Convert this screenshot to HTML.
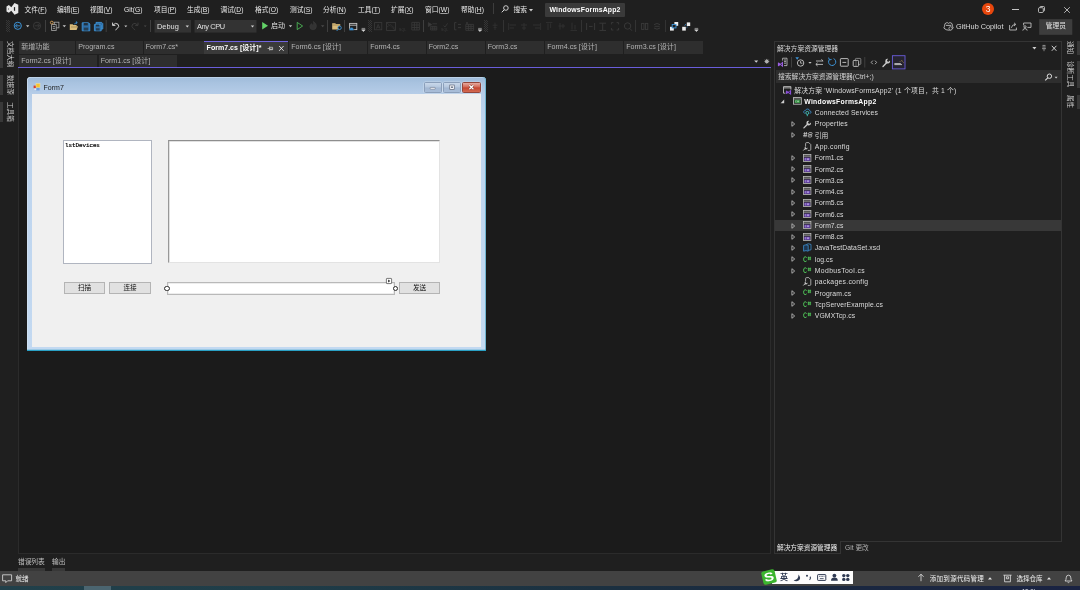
<!DOCTYPE html>
<html lang="zh-CN">
<head>
<meta charset="utf-8">
<title>WindowsFormsApp2 - Microsoft Visual Studio</title>
<style>
*{box-sizing:border-box;margin:0;padding:0}
html,body{width:1080px;height:590px;overflow:hidden;background:#1f1f1f}
body{position:relative;font-family:"Liberation Sans","Noto Sans CJK SC",sans-serif;font-size:6.8px;color:#d6d6d6;line-height:1}
.a{position:absolute;white-space:nowrap}
.t{position:absolute;white-space:nowrap;line-height:10px;height:10px}
.menu .t{top:5px;color:#e8e8e8;font-size:6.75px}
.menu u{text-decoration-thickness:0.5px;text-underline-offset:0.6px;text-decoration-color:#a0a0a0}
.tab{position:absolute;height:12.8px;background:#2e2e2e;color:#b4b4b4;font-size:7.1px;line-height:13.6px;padding-left:2.2px;white-space:nowrap;overflow:hidden}
.row{position:absolute;left:775px;width:286px;height:11.25px}
.row .t{top:1.2px;color:#dcdcdc;font-size:6.8px}
.vt{position:absolute;white-space:nowrap;transform-origin:0 0;transform:rotate(90deg);font-size:6.6px;line-height:10px;color:#c8c8c8}
svg{position:absolute;overflow:visible}
.btn{background:#e1e1e1;border:0.8px solid #b4b4b4;color:#111;font-size:6.6px;line-height:10.2px;text-align:center}
</style>
</head>
<body>
<div id="app" style="position:absolute;left:0;top:0;width:1080px;height:590px;will-change:transform">

<!-- ===== menu bar ===== -->
<div class="menu" id="menubar">
  <svg style="left:0;top:0" width="20" height="18" viewBox="0 0 20 18"><path d="M6.5 6.6L8.9 5.1L11.3 7.2L14.5 3.1L18.3 4.8V13L14.5 14.7L11.3 10.7L8.9 12.7L6.5 11.4Z M8.1 8.3V9.7L9.1 9Z M13.9 7.3L15.1 6.9V11L13.9 10.6Z" fill="#e6e6e6" fill-rule="evenodd"/></svg>
  <span class="t" style="left:24.5px">文件(<u>F</u>)</span>
  <span class="t" style="left:57px">编辑(<u>E</u>)</span>
  <span class="t" style="left:90px">视图(<u>V</u>)</span>
  <span class="t" style="left:124px">Git(<u>G</u>)</span>
  <span class="t" style="left:154px">项目(<u>P</u>)</span>
  <span class="t" style="left:187px">生成(<u>B</u>)</span>
  <span class="t" style="left:220.5px">调试(<u>D</u>)</span>
  <span class="t" style="left:255px">格式(<u>O</u>)</span>
  <span class="t" style="left:290px">测试(<u>S</u>)</span>
  <span class="t" style="left:323px">分析(<u>N</u>)</span>
  <span class="t" style="left:358px">工具(<u>T</u>)</span>
  <span class="t" style="left:391px">扩展(<u>X</u>)</span>
  <span class="t" style="left:425px">窗口(<u>W</u>)</span>
  <span class="t" style="left:461px">帮助(<u>H</u>)</span>
  <div class="a" style="left:493px;top:3px;width:1px;height:11px;background:#3d3d3d"></div>
  <svg style="left:501px;top:5px" width="8" height="8" viewBox="0 0 8 8"><circle cx="4.9" cy="3" r="2.3" fill="none" stroke="#dcdcdc" stroke-width="0.9"/><path d="M3.3 4.7 L0.8 7.3" stroke="#dcdcdc" stroke-width="1"/></svg>
  <span class="t" style="left:513.5px">搜索</span>
  <svg style="left:529px;top:8.5px" width="4" height="3" viewBox="0 0 4 3"><path d="M0 0H4L2 2.4Z" fill="#d0d0d0"/></svg>
  <div class="a" style="left:544.5px;top:2.5px;width:80.5px;height:14px;background:#3a3a3a;border-radius:1px"></div>
  <span class="t" style="left:549.5px;color:#fff;font-weight:bold;font-size:6.9px;letter-spacing:0.16px">WindowsFormsApp2</span>
  <div class="a" style="left:982px;top:3px;width:12px;height:12px;border-radius:6px;background:#e8470d;color:#fff;font-size:8.5px;line-height:12px;text-align:center">3</div>
  <div class="a" style="left:1012px;top:9px;width:6.6px;height:0.8px;background:#c4c4c4"></div>
  <svg style="left:1038px;top:6px" width="7" height="7" viewBox="0 0 7 7"><rect x="0.5" y="1.7" width="4.8" height="4.8" rx="1" fill="none" stroke="#d8d8d8" stroke-width="0.8"/><path d="M1.9 1.7 V1.3 Q1.9 0.5 2.7 0.5 H5.5 Q6.5 0.5 6.5 1.5 V4.3 Q6.5 5.1 5.7 5.1 H5.3" fill="none" stroke="#d8d8d8" stroke-width="0.8"/></svg>
  <svg style="left:1064px;top:6.5px" width="6" height="6" viewBox="0 0 6 6"><path d="M0.2 0.2L5.8 5.8M5.8 0.2L0.2 5.8" stroke="#d8d8d8" stroke-width="0.8"/></svg>
</div>

<!-- ===== toolbar ===== -->
<div id="toolbar">
<svg style="left:0;top:0" width="1080" height="40" viewBox="0 0 1080 40">
  <defs>
    <pattern id="grip" x="0" y="0" width="2" height="2" patternUnits="userSpaceOnUse"><rect x="0" y="0" width="1" height="1" fill="#363636"/><rect x="1" y="1" width="1" height="1" fill="#363636"/></pattern>
  </defs>
  <g fill="url(#grip)"><rect x="6" y="20" width="4" height="12"/><rect x="368" y="20" width="4" height="12"/><rect x="484" y="20" width="4" height="12"/></g>
  <!-- back / forward -->
  <circle cx="17.8" cy="25.8" r="3.6" fill="none" stroke="#3d93d6" stroke-width="1"/>
  <path d="M20.4 25.8H15.6M17.4 23.9L15.5 25.8L17.4 27.7" fill="none" stroke="#3d93d6" stroke-width="0.9"/>
  <path d="M26 25.3H29.4L27.7 27.2Z" fill="#c8c8c8"/>
  <circle cx="37" cy="25.8" r="3.6" fill="none" stroke="#3c3c3c" stroke-width="0.9"/>
  <path d="M34.6 25.8H39.4M37.6 23.9L39.5 25.8L37.6 27.7" fill="none" stroke="#3c3c3c" stroke-width="0.9"/>
  <g stroke="#3f3f3f" stroke-width="1"><path d="M45.5 20V32M106.2 20V32M150.5 20V32M327.5 20V32M344.5 20V32M423.5 20V32"/></g>
  <g stroke="#333" stroke-width="1"><path d="M503.5 20V32M581.5 20V32M635.5 20V32M665.5 20V32"/></g>
  <!-- new item -->
  <g fill="none" stroke="#a4a4a4" stroke-width="0.85"><rect x="54.3" y="22.2" width="4.6" height="5.6"/><rect x="51.6" y="24.6" width="4.6" height="5.8" fill="#1f1f1f"/><path d="M52.8 26.6H55M52.8 28.4H55"/></g>
  <circle cx="51.8" cy="22.6" r="1.4" fill="none" stroke="#d9a35a" stroke-width="0.9"/>
  <path d="M62.6 25.3H66L64.3 27.2Z" fill="#c8c8c8"/>
  <!-- open -->
  <path d="M69.8 24.2H72.6L73.4 25H76.6V26.2H78L76.6 30H69.8Z" fill="#d9bb7a"/>
  <path d="M71 27H77.2" stroke="#8a7444" stroke-width="0.6"/>
  <path d="M74.4 24.4Q75 22.6 77 22.6M75.9 21.4L77.3 22.6L75.9 23.8" fill="none" stroke="#3d93d6" stroke-width="0.9"/>
  <!-- save -->
  <path d="M82.2 22.8H88.6L89.8 24V30.8H82.2Z" fill="#2f6ea6" stroke="#3d93d6" stroke-width="0.9"/>
  <rect x="83.8" y="23" width="4" height="2.4" fill="#1f1f1f" opacity="0.75"/><rect x="83.8" y="27.6" width="4.4" height="3" fill="#1f1f1f" opacity="0.6"/>
  <!-- save all -->
  <path d="M96 22.4H101.6L102.8 23.6V29H96Z" fill="#2f6ea6" stroke="#3d93d6" stroke-width="0.9"/>
  <path d="M94.4 24.4H100.2L101.2 25.4V30.8H94.4Z" fill="#2f6ea6" stroke="#3d93d6" stroke-width="0.9"/>
  <rect x="96" y="24.6" width="3.2" height="1.8" fill="#1f1f1f" opacity="0.7"/><rect x="96" y="28.2" width="3.6" height="2.4" fill="#1f1f1f" opacity="0.6"/>
  <!-- undo / redo -->
  <path d="M112.6 22.6V25.4H115.4M112.8 25.2Q115.6 22 118 24.2Q119.8 26.4 117.4 28.4L115.4 30" fill="none" stroke="#d4d4d4" stroke-width="1"/>
  <path d="M124.3 25.6H127.3L125.8 27.3Z" fill="#c8c8c8"/>
  <path d="M138 22.6V25.4H135.2M137.8 25.2Q135 22 132.6 24.2Q130.8 26.4 133.2 28.4L135.2 30" fill="none" stroke="#3c3c3c" stroke-width="1"/>
  <path d="M143.8 25.6H146.6L145.2 27.1Z" fill="#4a4a4a"/>
  <!-- combos -->
  <rect x="154.5" y="20" width="36.5" height="12.6" fill="#333333"/>
  <rect x="194.5" y="20" width="62" height="12.6" fill="#333333"/>
  <path d="M185.6 25.6H189L187.3 27.4Z" fill="#d0d0d0"/>
  <path d="M250.8 25.6H254.2L252.5 27.4Z" fill="#d0d0d0"/>
  <!-- start -->
  <path d="M262.2 22V29.6L268 25.8Z" fill="#63d268"/>
  <path d="M288.8 25.3H292.2L290.5 27.2Z" fill="#c8c8c8"/>
  <path d="M297.2 22.4V29.6L302.6 26Z" fill="none" stroke="#4fbf5a" stroke-width="0.85"/>
  <path d="M313.4 21.4Q316.8 23.4 316.4 26.6Q316 29.8 313 29.8Q309.8 29.6 309.8 26.6Q309.8 24.4 312 23.6Q311.8 25.2 313 25.6Q314.2 23.6 313.4 21.4Z" fill="#333" stroke="#3a3a3a" stroke-width="0.6"/>
  <path d="M321 25.3H324.4L322.7 27.2Z" fill="#4a4a4a"/>
  <!-- folder search -->
  <path d="M332.2 23.2H335.2L336 24H340.2V29.4H332.2Z" fill="#d9bb7a"/>
  <path d="M332.2 25H340.2" stroke="#8a7444" stroke-width="0.6"/>
  <circle cx="339.6" cy="27.8" r="1.7" fill="#1f1f1f" stroke="#3d93d6" stroke-width="0.9"/><path d="M338.4 29.2L336.6 31" stroke="#3d93d6" stroke-width="0.9"/>
  <!-- window cloud -->
  <rect x="349.6" y="23.4" width="7.2" height="6.2" fill="none" stroke="#c4c4c4" stroke-width="0.9"/><path d="M349.6 25.2H356.8" stroke="#c4c4c4" stroke-width="0.9"/>
  <path d="M349.4 30.6Q348.6 29.2 350 28.6Q350.6 27 352 27.4Q353.4 27.4 353.4 28.8Q354.4 29.4 353.6 30.6Z" fill="#3d93d6" stroke="#1f1f1f" stroke-width="0.4"/>
  <path d="M361.6 28.4H365.2M361.6 29.8H365.2L363.4 31.6Z" fill="#d4d4d4" stroke="#d4d4d4" stroke-width="0.6"/>
  <!-- dim designer icons -->
  <g fill="none" stroke="#3a3a3a" stroke-width="0.8">
    <rect x="374.6" y="22.6" width="7.2" height="7.2"/><path d="M376.4 28.6L378.2 24.4L380 28.6M377 27.2H379.4"/>
    <rect x="386.6" y="22.4" width="8.8" height="8"/><path d="M387 23L395 30M387 27L390.5 24.5L395 28.5" stroke-dasharray="1 0.6"/>
    <path d="M411.8 22.4H419.4V30H411.8ZM414.4 22.4V30M416.9 22.4V30M411.8 25H419.4M411.8 27.5H419.4"/>
    <path d="M428.4 22.6L431.6 24.6L428.4 26.6Z" fill="#3a3a3a"/><path d="M432.4 23.8H437M430.6 26.4H436.8V30H430.6ZM430.6 28.2H436.8M432.8 26.4V30M434.8 26.4V30"/>
    <path d="M443.6 25.6L445 27L447.6 23.4"/>
    <path d="M454.6 22.6V29.8H456.4M454.6 22.6H456.4M458 24.4H461M458 27.6H461" stroke-width="0.9"/>
    <path d="M465.8 24.4H473.6V30.4H465.8ZM465.8 26.4H473.6M465.8 28.4H473.6M468.4 24.4V30.4M471 24.4V30.4M467 22V24M466 23H468"/>
    <path d="M495 22.6V30M492.6 25.2H497.6M493.6 27.4H496.6" stroke="#343434"/>
  </g>
  <text x="399" y="31.2" font-family="Liberation Sans, sans-serif" font-size="3.6" fill="#3c3c3c">SQL</text>
  <text x="441" y="31.2" font-family="Liberation Sans, sans-serif" font-size="3.6" fill="#3c3c3c">SQL</text>
  <path d="M478.2 28.4H481.8M478.2 29.8H481.8L480 31.6Z" fill="#d4d4d4" stroke="#d4d4d4" stroke-width="0.6"/>
  <g fill="none" stroke="#313131" stroke-width="0.9">
    <path d="M508.6 23V30M509.4 25H516M509.4 28H514"/>
    <path d="M524 23V30M521 25H527M522 28H526"/>
    <path d="M540.6 23V30M533 25H540M535 28H540"/>
    <path d="M546 22.4H552.4M548 23.4V30M550.6 23.4V28"/>
    <path d="M558.4 26H565M560 23V29.6M563 24V28.4"/>
    <path d="M570.4 30.4H577M572 22.6V29.6M575 25V29.6"/>
  </g>
  <g fill="none" stroke="#3b3b3b" stroke-width="0.9">
    <path d="M586.6 23V30M594.6 23V30M589 26.4H592.6"/>
    <path d="M599.4 23.2H606M599.4 30.4H606M602.7 23.2V30.4"/>
    <path d="M611.4 24.4V22.6H613.4M616.6 22.6H618.6V24.4M618.6 28V30H616.6M613.4 30H611.4V28"/>
    <circle cx="627.6" cy="26" r="3.2"/><path d="M630 28.6L632 30.8"/>
    <rect x="641.6" y="23.4" width="2.4" height="6"/><rect x="645.4" y="23.4" width="2.4" height="6"/>
    <path d="M654 24.6Q657 22.4 660 24.6M654 28Q657 30.4 660 28M654.6 26.3H659.6"/>
  </g>
  <!-- bring to front / send to back -->
  <rect x="674.4" y="22" width="3.8" height="3.8" fill="#ededed"/><rect x="670" y="26.8" width="3.8" height="3.8" fill="#ededed"/>
  <rect x="672.2" y="24.5" width="3.8" height="3.4" fill="#1f1f1f" stroke="#3d93d6" stroke-width="0.9"/>
  <rect x="686.8" y="22.4" width="3.4" height="3.6" fill="#ededed"/><rect x="682.2" y="26.8" width="3.6" height="3.8" fill="#ededed"/>
  <path d="M684.6 25.4L686 24.4M686.6 27.6L687.6 26.8" stroke="#3d93d6" stroke-width="0.9"/>
  <path d="M694.6 28.4H698.2M694.6 29.8H698.2L696.4 31.6Z" fill="#d4d4d4" stroke="#d4d4d4" stroke-width="0.6"/>
  <!-- right: copilot etc -->
  <g fill="none" stroke="#d0d0d0" stroke-width="0.8">
    <path d="M944.6 26.2Q944.4 23 946.4 22.8Q948 22.4 948.6 23.4Q949.4 22.4 950.8 22.8Q952.6 23 952.4 26.2Q953.4 27 953 28.2Q951 30.2 948.6 30.2Q946 30.2 944 28.2Q943.8 27 944.6 26.2Z"/>
    <path d="M946 25.4H951.2"/>
    <path d="M1009.6 25V30H1016.4V27.6M1011.4 27.8Q1012 24.6 1015.2 24.4M1014 22.8L1015.8 24.4L1014 26"/>
    <path d="M1023.6 23H1031V27.4H1027.4M1023.6 23V25.4"/><circle cx="1025" cy="26.8" r="1.1"/><path d="M1022.8 30.6Q1023 28.6 1025 28.6Q1027 28.6 1027.2 30.6"/>
  </g>
  <circle cx="950.6" cy="28.4" r="1.7" fill="#1f1f1f" stroke="#d0d0d0" stroke-width="0.7"/>
  <rect x="1039.2" y="19.2" width="33.1" height="15.6" fill="#3d3d3d"/>
</svg>
<span class="t" style="left:157px;top:21.8px;font-size:7.4px;color:#e0e0e0">Debug</span>
<span class="t" style="left:197px;top:21.8px;font-size:7.4px;letter-spacing:-0.4px;color:#e0e0e0">Any CPU</span>
<span class="t" style="left:271px;top:21.4px;font-size:7px;color:#e0e0e0">启动</span>
<span class="t" style="left:956px;top:21.8px;font-size:7.3px;color:#dcdcdc">GitHub Copilot</span>
<span class="t" style="left:1045.8px;top:21.3px;font-size:6.7px;color:#e8e8e8">管理员</span>
</div>


<!-- ===== doc tabs ===== -->
<div id="tabs">
  <!-- left vertical strip -->
  <div class="a" style="left:0;top:41px;width:3px;height:26.5px;background:#383838"></div>
  <div class="a" style="left:0;top:75px;width:3px;height:19.5px;background:#383838"></div>
  <div class="a" style="left:0;top:102px;width:3px;height:19.5px;background:#383838"></div>
  <span class="vt" style="left:14.5px;top:41px">文档大纲</span>
  <span class="vt" style="left:14.5px;top:75px">数据源</span>
  <span class="vt" style="left:14.5px;top:102px">工具箱</span>
  <!-- row 1 -->
  <div class="tab" style="left:19px;top:41px;width:56px">新增功能</div>
  <div class="tab" style="left:76px;top:41px;width:66.5px">Program.cs</div>
  <div class="tab" style="left:143.5px;top:41px;width:60px">Form7.cs*</div>
  <div class="tab" style="left:204px;top:40.8px;width:84.2px;height:13.2px;background:#3a3a3a;color:#fff;font-weight:bold;border-top:1.4px solid #6f62e0;line-height:12.6px;padding-left:2.6px;font-size:7.05px">Form7.cs [设计]*</div>
  <svg style="left:267px;top:45px" width="20" height="7" viewBox="0 0 20 7"><path d="M0.6 3.5H2.6M2.6 1.6V5.4M2.6 2.3H5.6V4.7H2.6M5.6 4.2H3" fill="none" stroke="#d8d8d8" stroke-width="0.7"/><path d="M12.2 1L16.6 5.8M16.6 1L12.2 5.8" stroke="#ededed" stroke-width="0.9"/></svg>
  <div class="tab" style="left:289px;top:41px;width:78px">Form6.cs [设计]</div>
  <div class="tab" style="left:368px;top:41px;width:57.5px">Form4.cs</div>
  <div class="tab" style="left:426.5px;top:41px;width:58px">Form2.cs</div>
  <div class="tab" style="left:485.5px;top:41px;width:58.5px">Form3.cs</div>
  <div class="tab" style="left:545px;top:41px;width:77.5px">Form4.cs [设计]</div>
  <div class="tab" style="left:624px;top:41px;width:78.5px">Form3.cs [设计]</div>
  <!-- row 2 -->
  <div class="tab" style="left:19px;top:54.9px;width:78px;height:12px;line-height:12.6px">Form2.cs [设计]</div>
  <div class="tab" style="left:98.5px;top:54.9px;width:78.5px;height:12px;line-height:12.6px">Form1.cs [设计]</div>
  <svg style="left:753px;top:58px" width="18" height="7" viewBox="0 0 18 7"><path d="M1.2 2.4H5.2L3.2 4.8Z" fill="#d0d0d0"/><g transform="translate(13.8 3.4)"><circle r="1.3" fill="none" stroke="#c4c4c4" stroke-width="1"/><path d="M0 -2.5V2.5M-2.5 0H2.5M-1.75 -1.75L1.75 1.75M-1.75 1.75L1.75 -1.75" stroke="#c4c4c4" stroke-width="0.6"/></g></svg>
  <div class="a" style="left:18px;top:66.6px;width:753px;height:1.6px;background:#6a5edb"></div>
</div>

<div id="designer">
  <div class="a" style="left:18px;top:68.2px;width:753px;height:485.4px;background:#1b1b1b;border:1px solid #2b2b2b;border-top:none"></div>
  <!-- Form7 window -->
  <div class="a" style="left:27px;top:77px;width:458.5px;height:274.4px;border-radius:3.5px 3.5px 0 0;background:linear-gradient(#9ebad9 0,#a9c3e0 6px,#b6cde8 17px,#bdd4ee 40px,#c3d9f1 100%);box-shadow:inset 0 -1.2px 0 #2aa0c4, inset -1px 0 0 #6fb4d0, inset 0.6px 0.6px 0 #d8e6f4"></div>
  <div class="a" style="left:32px;top:93.8px;width:449px;height:253.4px;background:#f0f0f0"></div>
  <!-- form icon -->
  <svg style="left:33px;top:83px" width="8" height="8" viewBox="0 0 8 8"><rect x="0.6" y="2.6" width="2.6" height="2.6" fill="#d43c2e"/><rect x="3" y="0.6" width="4" height="4" fill="#f4c430" stroke="#f9e39a" stroke-width="0.5"/><rect x="3.2" y="4.8" width="3.4" height="2.6" fill="#6f9fe0"/><rect x="1.4" y="5.4" width="1.8" height="1.6" fill="#e8e8f4"/></svg>
  <span class="t" style="left:43.6px;top:82.6px;color:#1a1a1a;font-size:7px">Form7</span>
  <!-- caption buttons -->
  <div class="a" style="left:424px;top:82px;width:17.5px;height:10.6px;border:0.8px solid #8b9fba;border-radius:1.5px;box-shadow:0 0 0 0.6px rgba(255,255,255,0.35);background:linear-gradient(#c9d8ea,#b4c6dd 48%,#a3b8d3 52%,#a9bdd8)"></div>
  <div class="a" style="left:443px;top:82px;width:17.8px;height:10.6px;border:0.8px solid #8b9fba;border-radius:1.5px;box-shadow:0 0 0 0.6px rgba(255,255,255,0.35);background:linear-gradient(#c9d8ea,#b4c6dd 48%,#a3b8d3 52%,#a9bdd8)"></div>
  <div class="a" style="left:462px;top:82px;width:18.6px;height:10.6px;border:0.8px solid #94463a;border-radius:1.5px;box-shadow:0 0 0 0.6px rgba(255,255,255,0.35);background:linear-gradient(#e6aa9f,#d26552 48%,#c4452f 52%,#d36a52)"></div>
  <svg style="left:424px;top:82px" width="57" height="11" viewBox="0 0 57 11"><rect x="6.2" y="5.4" width="5" height="1.8" rx="0.4" fill="#f4f6fa" stroke="#5a6578" stroke-width="0.5"/><rect x="25.8" y="3" width="4.4" height="4.4" fill="#f4f6fa" stroke="#4c5566" stroke-width="0.6"/><rect x="27.2" y="4.4" width="1.6" height="1.6" fill="#5a6578"/><path d="M45.4 3.2L49.4 7.2M49.4 3.2L45.4 7.2" stroke="#6d2b22" stroke-width="2.2"/><path d="M45.4 3.2L49.4 7.2M49.4 3.2L45.4 7.2" stroke="#fff" stroke-width="1.3"/></svg>
  <!-- listbox -->
  <div class="a" style="left:63.2px;top:140.2px;width:88.8px;height:123.4px;background:#fff;border:1px solid #b0b5c0"></div>
  <span class="t" style="left:65px;top:140.6px;color:#000;font-family:'Liberation Mono','Noto Sans CJK SC',monospace;font-size:5.9px;letter-spacing:-0.05px;-webkit-text-stroke:0.2px #000">lstDevices</span>
  <!-- big textbox -->
  <div class="a" style="left:168px;top:140.4px;width:272.4px;height:122.6px;background:#fff;border:1px solid #e3e3e3;border-top-color:#8e8e8e;border-left-color:#989898;box-shadow:inset 0.5px 0.5px 0 #c4c4c4"></div>
  <!-- buttons -->
  <div class="a btn" style="left:64px;top:282px;width:41.2px;height:11.8px">扫描</div>
  <div class="a btn" style="left:109.4px;top:282px;width:41.4px;height:11.8px">连接</div>
  <div class="a btn" style="left:399px;top:282px;width:41.2px;height:11.8px">发送</div>
  <!-- selected textbox -->
  <div class="a" style="left:167px;top:281.6px;width:228px;height:13.6px;background:#fff;border:1.2px solid #b9b9b9;box-shadow:inset 0 0 0 0.5px #dcdcdc"></div>
  <div class="a" style="left:164.4px;top:285.9px;width:5.2px;height:5.2px;border-radius:50%;background:#fff;border:0.8px solid #2a2a2a"></div>
  <div class="a" style="left:393.2px;top:285.9px;width:5.2px;height:5.2px;border-radius:50%;background:#fff;border:0.8px solid #2a2a2a"></div>
  <svg style="left:386.4px;top:278.2px" width="6" height="6" viewBox="0 0 6 6"><rect x="0.4" y="0.4" width="5.2" height="5.2" rx="0.6" fill="#fff" stroke="#444" stroke-width="0.7"/><path d="M2.2 1.6V4.4L4.2 3Z" fill="#222"/></svg>
</div>


<!-- ===== solution explorer ===== -->
<div id="solexp">
  <div class="a" style="left:773.8px;top:40.6px;width:287.8px;height:501px;border:1px solid #343434;background:#1f1f1f"></div>
  <span class="t" style="left:777px;top:43.7px;color:#d8d8d8;font-size:6.8px">解决方案资源管理器</span>
  <svg style="left:1030px;top:44px" width="30" height="9" viewBox="0 0 30 9"><path d="M2.4 3H6.4L4.4 5.4Z" fill="#d0d0d0"/><path d="M12.6 1.4H15.4M13.1 1.4V4.6M14.9 1.4V4.6M12 4.7H16M14 4.8V7.2" fill="none" stroke="#c4c4c4" stroke-width="0.6"/><path d="M21.8 1.8L26.4 6.8M26.4 1.8L21.8 6.8" stroke="#e0e0e0" stroke-width="0.9"/></svg>
  <svg style="left:772px;top:52px" width="140" height="20" viewBox="0 0 140 20">
    <path d="M10.6 6.2H15V13.6H12M10.6 6.2V8.6M12 8H14M12 9.6H14M12 11.2H14" fill="none" stroke="#c4c4c4" stroke-width="0.8"/>
    <path d="M11 9.4V15.2L8.4 12.9L6.6 14.3L5.9 13.9V10.8L6.6 10.4L8.4 11.8Z M9.8 11.4V13.3L8.7 12.35Z" fill="#9a5fe0" fill-rule="evenodd"/>
    <path d="M19.5 5V15.5M92.8 5V15.5" stroke="#3f3f3f" stroke-width="1"/>
    <circle cx="28.6" cy="11" r="3.2" fill="none" stroke="#c8c8c8" stroke-width="0.9"/><path d="M28.6 9V11.2H30.4" fill="none" stroke="#c8c8c8" stroke-width="0.8"/><path d="M23.4 5.2H27L25.2 7.8Z" fill="#3d93d6"/>
    <path d="M36.4 10H39.6L38 11.8Z" fill="#c8c8c8"/>
    <path d="M44 9H51M49.4 7.4L51.2 9M51 12.4H44M45.6 10.8L43.8 12.4L45.6 14" fill="none" stroke="#c8c8c8" stroke-width="0.85"/>
    <path d="M61.6 6.6A3.6 3.6 0 1 1 57.4 7.6M56.6 5.6L57.4 7.9L59.6 7.4" fill="none" stroke="#3d93d6" stroke-width="1"/>
    <rect x="68.4" y="6.6" width="7.8" height="7.6" rx="0.6" fill="none" stroke="#c8c8c8" stroke-width="0.9"/><path d="M70.4 10.4H74.2" stroke="#c8c8c8" stroke-width="0.9"/>
    <rect x="83.4" y="6.4" width="5.4" height="6" rx="0.8" fill="none" stroke="#8a8a8a" stroke-width="0.9"/><rect x="81.2" y="8.4" width="5.4" height="6" rx="0.8" fill="#1f1f1f" stroke="#c8c8c8" stroke-width="0.9"/><path d="M84 8.4V14.4" stroke="#8a8a8a" stroke-width="0.6"/>
    <path d="M100.8 8.6L99.2 10.4L100.8 12.2M103 8.6L104.6 10.4L103 12.2" fill="none" stroke="#c8c8c8" stroke-width="0.8"/>
    <path d="M111 14.4L114.6 10.8" stroke="#c8c8c8" stroke-width="1.4" stroke-linecap="round"/><path d="M118 8.6A2.4 2.4 0 1 1 116.2 6.8L115 8.2L115.4 9.5L116.7 9.8Z" fill="#c8c8c8"/>
    <rect x="120.4" y="3.7" width="12.6" height="13.2" fill="#262430" stroke="#6a5edb" stroke-width="0.9"/>
    <path d="M122.4 11.6H128.8M122.4 12.6H130" stroke="#c8c8c8" stroke-width="0.9"/><path d="M129.6 8.2L130.4 9.6M131.2 10.6H131.8M128 9.4L128.6 10" stroke="#e8c060" stroke-width="0.6"/>
  </svg>
  <div class="a" style="left:775.5px;top:70.4px;width:285px;height:12.6px;background:#2e2e2e"></div>
  <span class="t" style="left:778px;top:72.2px;color:#d0d0d0;font-size:6.8px">搜索解决方案资源管理器(Ctrl+;)</span>
  <svg style="left:1044px;top:72.5px" width="16" height="9" viewBox="0 0 16 9"><circle cx="5.4" cy="3.2" r="2.2" fill="none" stroke="#dcdcdc" stroke-width="1"/><path d="M3.8 4.8L1.2 7.4" stroke="#dcdcdc" stroke-width="1.1"/><path d="M10.6 3.8H13.6L12.1 5.5Z" fill="#d0d0d0"/></svg>
<!--ROWS-START-->
<div class="row" style="top:84.46px;"><svg style="left:8px;top:1.6px" width="9" height="9" viewBox="0 0 9 9"><path d="M0.5 7.2V0.6H7.9V3.6M0.5 1.9H7.9M0.5 7.2H2.4" fill="none" stroke="#c8c8c8" stroke-width="0.85"/><path d="M8.1 3.7V8.9L5.2 6.9L3.6 8.1L2.9 7.7V4.9L3.6 4.5L5.2 5.7Z M6.9 5.3V7.3L5.8 6.3Z" fill="#8a4fd8" fill-rule="evenodd"/></svg><span class="t" style="left:19.3px;letter-spacing:0.2px;">解决方案 'WindowsFormsApp2' (1 个项目，共 1 个)</span></div>
<div class="row" style="top:95.73px;"><svg style="left:5.4px;top:3.6px" width="5" height="5" viewBox="0 0 5 5"><path d="M4.2 0.6V4.2H0.6Z" fill="#d0d0d0"/></svg><svg style="left:18px;top:1.6px" width="9" height="8" viewBox="0 0 9 8"><rect x="0.5" y="0.6" width="7.8" height="6.6" fill="#262626" stroke="#c8c8c8" stroke-width="0.8"/><path d="M0.5 2H8.3" stroke="#c8c8c8" stroke-width="0.6"/><rect x="1.6" y="2.8" width="5.6" height="3.2" fill="#2f8a3e"/><path d="M3.6 3.6H2.6V5.2H3.6M4.6 3.6V5.2M5.6 3.6V5.2M4.2 4.1H6M4.2 4.8H6" stroke="#bfe8c4" stroke-width="0.4" fill="none"/></svg><span class="t" style="left:29.3px;font-weight:bold;color:#fff;letter-spacing:0.29px;">WindowsFormsApp2</span></div>
<div class="row" style="top:107.00px;"><svg style="left:28.2px;top:1.4px" width="9" height="9" viewBox="0 0 9 9"><path d="M1.8 5.4Q0.2 4.8 0.8 3.4Q1.2 2.4 2.4 2.6Q3 0.8 4.8 1Q6.4 1.2 6.6 2.8Q8.2 3 8 4.4Q7.8 5.4 6.8 5.4" fill="none" stroke="#3d93d6" stroke-width="0.8"/><circle cx="4.3" cy="4.9" r="1.5" fill="none" stroke="#45c6c0" stroke-width="0.9"/><path d="M4.3 6.4V8.2" stroke="#45c6c0" stroke-width="0.9"/></svg><span class="t" style="left:39.8px;letter-spacing:0.135px;">Connected Services</span></div>
<div class="row" style="top:118.27px;"><svg style="left:15.6px;top:2.8px" width="5" height="6" viewBox="0 0 5 6"><path d="M0.9 0.7V5.3L3.7 3Z" fill="none" stroke="#b4b4b4" stroke-width="0.9"/></svg><svg style="left:28.2px;top:1.4px" width="9" height="9" viewBox="0 0 9 9"><path d="M0.9 7.9L4.3 4.5" stroke="#c8c8c8" stroke-width="1.3" stroke-linecap="round"/><path d="M7.9 2.6A2.3 2.3 0 1 1 6.2 0.9L5 2.2L5.4 3.5L6.7 3.8Z" fill="#c8c8c8"/></svg><span class="t" style="left:39.8px;letter-spacing:0.22px;">Properties</span></div>
<div class="row" style="top:129.55px;"><svg style="left:15.6px;top:2.8px" width="5" height="6" viewBox="0 0 5 6"><path d="M0.9 0.7V5.3L3.7 3Z" fill="none" stroke="#b4b4b4" stroke-width="0.9"/></svg><svg style="left:28.2px;top:1.8px" width="10" height="8" viewBox="0 0 10 8"><g fill="none" stroke="#c8c8c8" stroke-width="0.75"><path d="M1.8 1L1 6.2M3.6 1L2.8 6.2M0.4 2.6H4.4M0.1 4.6H4.1"/><rect x="5.3" y="1.6" width="3.6" height="2" rx="0.9" transform="skewX(-8) translate(0.6 0)"/><rect x="5" y="4" width="3.6" height="2" rx="0.9" transform="skewX(-8) translate(0.9 0)"/></g></svg><span class="t" style="left:39.8px;">引用</span></div>
<div class="row" style="top:140.81px;"><svg style="left:28.2px;top:1.2px" width="9" height="9" viewBox="0 0 9 9"><path d="M2.6 4.2V1.6Q2.6 0.6 3.6 0.6H5.8L7.8 2.6V7.4Q7.8 8.4 6.8 8.4H4.8" fill="none" stroke="#c8c8c8" stroke-width="0.8"/><path d="M0.6 8.2L2 6.8" stroke="#c8c8c8" stroke-width="1" stroke-linecap="round"/><path d="M4.5 5.6A1.5 1.5 0 1 1 3.3 4.5L2.6 5.3L2.9 6L3.7 6.3Z" fill="#c8c8c8"/></svg><span class="t" style="left:39.8px;letter-spacing:0.3px;">App.config</span></div>
<div class="row" style="top:152.09px;"><svg style="left:15.6px;top:2.8px" width="5" height="6" viewBox="0 0 5 6"><path d="M0.9 0.7V5.3L3.7 3Z" fill="none" stroke="#b4b4b4" stroke-width="0.9"/></svg><svg style="left:28.2px;top:1.6px" width="9" height="8" viewBox="0 0 9 8"><rect x="0.5" y="0.5" width="7.4" height="7" fill="#2a2a2a" stroke="#bdbdbd" stroke-width="0.8"/><path d="M0.5 2.1H7.9" stroke="#bdbdbd" stroke-width="0.8"/><rect x="1.2" y="3.6" width="6" height="3.3" fill="#6240a4"/><path d="M3.2 4.4H2.2V6H3.2M4.4 4.3V6.1M5.6 4.3V6.1M3.9 4.8H6.1M3.9 5.6H6.1" stroke="#c9b3f0" stroke-width="0.45" fill="none"/></svg><span class="t" style="left:39.8px;letter-spacing:0.05px;">Form1.cs</span></div>
<div class="row" style="top:163.36px;"><svg style="left:15.6px;top:2.8px" width="5" height="6" viewBox="0 0 5 6"><path d="M0.9 0.7V5.3L3.7 3Z" fill="none" stroke="#b4b4b4" stroke-width="0.9"/></svg><svg style="left:28.2px;top:1.6px" width="9" height="8" viewBox="0 0 9 8"><rect x="0.5" y="0.5" width="7.4" height="7" fill="#2a2a2a" stroke="#bdbdbd" stroke-width="0.8"/><path d="M0.5 2.1H7.9" stroke="#bdbdbd" stroke-width="0.8"/><rect x="1.2" y="3.6" width="6" height="3.3" fill="#6240a4"/><path d="M3.2 4.4H2.2V6H3.2M4.4 4.3V6.1M5.6 4.3V6.1M3.9 4.8H6.1M3.9 5.6H6.1" stroke="#c9b3f0" stroke-width="0.45" fill="none"/></svg><span class="t" style="left:39.8px;letter-spacing:0.05px;">Form2.cs</span></div>
<div class="row" style="top:174.62px;"><svg style="left:15.6px;top:2.8px" width="5" height="6" viewBox="0 0 5 6"><path d="M0.9 0.7V5.3L3.7 3Z" fill="none" stroke="#b4b4b4" stroke-width="0.9"/></svg><svg style="left:28.2px;top:1.6px" width="9" height="8" viewBox="0 0 9 8"><rect x="0.5" y="0.5" width="7.4" height="7" fill="#2a2a2a" stroke="#bdbdbd" stroke-width="0.8"/><path d="M0.5 2.1H7.9" stroke="#bdbdbd" stroke-width="0.8"/><rect x="1.2" y="3.6" width="6" height="3.3" fill="#6240a4"/><path d="M3.2 4.4H2.2V6H3.2M4.4 4.3V6.1M5.6 4.3V6.1M3.9 4.8H6.1M3.9 5.6H6.1" stroke="#c9b3f0" stroke-width="0.45" fill="none"/></svg><span class="t" style="left:39.8px;letter-spacing:0.05px;">Form3.cs</span></div>
<div class="row" style="top:185.89px;"><svg style="left:15.6px;top:2.8px" width="5" height="6" viewBox="0 0 5 6"><path d="M0.9 0.7V5.3L3.7 3Z" fill="none" stroke="#b4b4b4" stroke-width="0.9"/></svg><svg style="left:28.2px;top:1.6px" width="9" height="8" viewBox="0 0 9 8"><rect x="0.5" y="0.5" width="7.4" height="7" fill="#2a2a2a" stroke="#bdbdbd" stroke-width="0.8"/><path d="M0.5 2.1H7.9" stroke="#bdbdbd" stroke-width="0.8"/><rect x="1.2" y="3.6" width="6" height="3.3" fill="#6240a4"/><path d="M3.2 4.4H2.2V6H3.2M4.4 4.3V6.1M5.6 4.3V6.1M3.9 4.8H6.1M3.9 5.6H6.1" stroke="#c9b3f0" stroke-width="0.45" fill="none"/></svg><span class="t" style="left:39.8px;letter-spacing:0.05px;">Form4.cs</span></div>
<div class="row" style="top:197.16px;"><svg style="left:15.6px;top:2.8px" width="5" height="6" viewBox="0 0 5 6"><path d="M0.9 0.7V5.3L3.7 3Z" fill="none" stroke="#b4b4b4" stroke-width="0.9"/></svg><svg style="left:28.2px;top:1.6px" width="9" height="8" viewBox="0 0 9 8"><rect x="0.5" y="0.5" width="7.4" height="7" fill="#2a2a2a" stroke="#bdbdbd" stroke-width="0.8"/><path d="M0.5 2.1H7.9" stroke="#bdbdbd" stroke-width="0.8"/><rect x="1.2" y="3.6" width="6" height="3.3" fill="#6240a4"/><path d="M3.2 4.4H2.2V6H3.2M4.4 4.3V6.1M5.6 4.3V6.1M3.9 4.8H6.1M3.9 5.6H6.1" stroke="#c9b3f0" stroke-width="0.45" fill="none"/></svg><span class="t" style="left:39.8px;letter-spacing:0.05px;">Form5.cs</span></div>
<div class="row" style="top:208.44px;"><svg style="left:15.6px;top:2.8px" width="5" height="6" viewBox="0 0 5 6"><path d="M0.9 0.7V5.3L3.7 3Z" fill="none" stroke="#b4b4b4" stroke-width="0.9"/></svg><svg style="left:28.2px;top:1.6px" width="9" height="8" viewBox="0 0 9 8"><rect x="0.5" y="0.5" width="7.4" height="7" fill="#2a2a2a" stroke="#bdbdbd" stroke-width="0.8"/><path d="M0.5 2.1H7.9" stroke="#bdbdbd" stroke-width="0.8"/><rect x="1.2" y="3.6" width="6" height="3.3" fill="#6240a4"/><path d="M3.2 4.4H2.2V6H3.2M4.4 4.3V6.1M5.6 4.3V6.1M3.9 4.8H6.1M3.9 5.6H6.1" stroke="#c9b3f0" stroke-width="0.45" fill="none"/></svg><span class="t" style="left:39.8px;letter-spacing:0.05px;">Form6.cs</span></div>
<div class="row" style="top:219.71px; background:#383838;"><svg style="left:15.6px;top:2.8px" width="5" height="6" viewBox="0 0 5 6"><path d="M0.9 0.7V5.3L3.7 3Z" fill="none" stroke="#b4b4b4" stroke-width="0.9"/></svg><svg style="left:28.2px;top:1.6px" width="9" height="8" viewBox="0 0 9 8"><rect x="0.5" y="0.5" width="7.4" height="7" fill="#2a2a2a" stroke="#bdbdbd" stroke-width="0.8"/><path d="M0.5 2.1H7.9" stroke="#bdbdbd" stroke-width="0.8"/><rect x="1.2" y="3.6" width="6" height="3.3" fill="#6240a4"/><path d="M3.2 4.4H2.2V6H3.2M4.4 4.3V6.1M5.6 4.3V6.1M3.9 4.8H6.1M3.9 5.6H6.1" stroke="#c9b3f0" stroke-width="0.45" fill="none"/></svg><span class="t" style="left:39.8px;letter-spacing:0.05px;">Form7.cs</span></div>
<div class="row" style="top:230.97px;"><svg style="left:15.6px;top:2.8px" width="5" height="6" viewBox="0 0 5 6"><path d="M0.9 0.7V5.3L3.7 3Z" fill="none" stroke="#b4b4b4" stroke-width="0.9"/></svg><svg style="left:28.2px;top:1.6px" width="9" height="8" viewBox="0 0 9 8"><rect x="0.5" y="0.5" width="7.4" height="7" fill="#2a2a2a" stroke="#bdbdbd" stroke-width="0.8"/><path d="M0.5 2.1H7.9" stroke="#bdbdbd" stroke-width="0.8"/><rect x="1.2" y="3.6" width="6" height="3.3" fill="#6240a4"/><path d="M3.2 4.4H2.2V6H3.2M4.4 4.3V6.1M5.6 4.3V6.1M3.9 4.8H6.1M3.9 5.6H6.1" stroke="#c9b3f0" stroke-width="0.45" fill="none"/></svg><span class="t" style="left:39.8px;letter-spacing:0.05px;">Form8.cs</span></div>
<div class="row" style="top:242.25px;"><svg style="left:15.6px;top:2.8px" width="5" height="6" viewBox="0 0 5 6"><path d="M0.9 0.7V5.3L3.7 3Z" fill="none" stroke="#b4b4b4" stroke-width="0.9"/></svg><svg style="left:28.2px;top:1.2px" width="9" height="9" viewBox="0 0 9 9"><g fill="none" stroke="#3d8fd0" stroke-width="0.8"><path d="M3.2 1.6L5.2 0.8L8 1.4V6.8L5.2 7.4"/><path d="M0.6 2.4L3 1.8L5.2 2.4V8.2L3 7.6L0.6 8.2Z" fill="#1d3650"/></g></svg><span class="t" style="left:39.8px;letter-spacing:0.075px;">JavaTestDataSet.xsd</span></div>
<div class="row" style="top:253.51px;"><svg style="left:15.6px;top:2.8px" width="5" height="6" viewBox="0 0 5 6"><path d="M0.9 0.7V5.3L3.7 3Z" fill="none" stroke="#b4b4b4" stroke-width="0.9"/></svg><svg style="left:28.2px;top:2px" width="9" height="8" viewBox="0 0 9 8"><path d="M3.7 1.6Q3 0.7 2 0.8Q0.6 1 0.6 3.2Q0.6 5.4 2 5.6Q3 5.7 3.7 4.8" fill="none" stroke="#4fc157" stroke-width="1"/><path d="M5.6 0.6V4.2M7.2 0.6V4.2M4.7 1.7H8.1M4.7 3.1H8.1" fill="none" stroke="#4fc157" stroke-width="0.8"/></svg><span class="t" style="left:39.8px;letter-spacing:0.08px;">log.cs</span></div>
<div class="row" style="top:264.78px;"><svg style="left:15.6px;top:2.8px" width="5" height="6" viewBox="0 0 5 6"><path d="M0.9 0.7V5.3L3.7 3Z" fill="none" stroke="#b4b4b4" stroke-width="0.9"/></svg><svg style="left:28.2px;top:2px" width="9" height="8" viewBox="0 0 9 8"><path d="M3.7 1.6Q3 0.7 2 0.8Q0.6 1 0.6 3.2Q0.6 5.4 2 5.6Q3 5.7 3.7 4.8" fill="none" stroke="#4fc157" stroke-width="1"/><path d="M5.6 0.6V4.2M7.2 0.6V4.2M4.7 1.7H8.1M4.7 3.1H8.1" fill="none" stroke="#4fc157" stroke-width="0.8"/></svg><span class="t" style="left:39.8px;letter-spacing:0.37px;">ModbusTool.cs</span></div>
<div class="row" style="top:276.06px;"><svg style="left:28.2px;top:1.2px" width="9" height="9" viewBox="0 0 9 9"><path d="M2.6 4.2V1.6Q2.6 0.6 3.6 0.6H5.8L7.8 2.6V7.4Q7.8 8.4 6.8 8.4H4.8" fill="none" stroke="#c8c8c8" stroke-width="0.8"/><path d="M0.6 8.2L2 6.8" stroke="#c8c8c8" stroke-width="1" stroke-linecap="round"/><path d="M4.5 5.6A1.5 1.5 0 1 1 3.3 4.5L2.6 5.3L2.9 6L3.7 6.3Z" fill="#c8c8c8"/></svg><span class="t" style="left:39.8px;letter-spacing:0.29px;">packages.config</span></div>
<div class="row" style="top:287.32px;"><svg style="left:15.6px;top:2.8px" width="5" height="6" viewBox="0 0 5 6"><path d="M0.9 0.7V5.3L3.7 3Z" fill="none" stroke="#b4b4b4" stroke-width="0.9"/></svg><svg style="left:28.2px;top:2px" width="9" height="8" viewBox="0 0 9 8"><path d="M3.7 1.6Q3 0.7 2 0.8Q0.6 1 0.6 3.2Q0.6 5.4 2 5.6Q3 5.7 3.7 4.8" fill="none" stroke="#4fc157" stroke-width="1"/><path d="M5.6 0.6V4.2M7.2 0.6V4.2M4.7 1.7H8.1M4.7 3.1H8.1" fill="none" stroke="#4fc157" stroke-width="0.8"/></svg><span class="t" style="left:39.8px;letter-spacing:0.19px;">Program.cs</span></div>
<div class="row" style="top:298.60px;"><svg style="left:15.6px;top:2.8px" width="5" height="6" viewBox="0 0 5 6"><path d="M0.9 0.7V5.3L3.7 3Z" fill="none" stroke="#b4b4b4" stroke-width="0.9"/></svg><svg style="left:28.2px;top:2px" width="9" height="8" viewBox="0 0 9 8"><path d="M3.7 1.6Q3 0.7 2 0.8Q0.6 1 0.6 3.2Q0.6 5.4 2 5.6Q3 5.7 3.7 4.8" fill="none" stroke="#4fc157" stroke-width="1"/><path d="M5.6 0.6V4.2M7.2 0.6V4.2M4.7 1.7H8.1M4.7 3.1H8.1" fill="none" stroke="#4fc157" stroke-width="0.8"/></svg><span class="t" style="left:39.8px;letter-spacing:0.13px;">TcpServerExample.cs</span></div>
<div class="row" style="top:309.87px;"><svg style="left:15.6px;top:2.8px" width="5" height="6" viewBox="0 0 5 6"><path d="M0.9 0.7V5.3L3.7 3Z" fill="none" stroke="#b4b4b4" stroke-width="0.9"/></svg><svg style="left:28.2px;top:2px" width="9" height="8" viewBox="0 0 9 8"><path d="M3.7 1.6Q3 0.7 2 0.8Q0.6 1 0.6 3.2Q0.6 5.4 2 5.6Q3 5.7 3.7 4.8" fill="none" stroke="#4fc157" stroke-width="1"/><path d="M5.6 0.6V4.2M7.2 0.6V4.2M4.7 1.7H8.1M4.7 3.1H8.1" fill="none" stroke="#4fc157" stroke-width="0.8"/></svg><span class="t" style="left:39.8px;letter-spacing:0.12px;">VGMXTcp.cs</span></div>
<!--ROWS-END-->
  <!-- bottom tabs -->
  <div class="a" style="left:773.8px;top:541px;width:67.2px;height:12.6px;background:#1f1f1f;border:1px solid #343434;border-top:none"></div>
  <span class="t" style="left:777px;top:542.6px;color:#f0f0f0;font-size:6.7px">解决方案资源管理器</span>
  <span class="t" style="left:845px;top:542.6px;color:#b0b0b0;font-size:6.7px">Git 更改</span>
  <!-- right strip -->
  <div class="a" style="left:1076.6px;top:41px;width:3.4px;height:13.5px;background:#383838"></div>
  <div class="a" style="left:1076.6px;top:61px;width:3.4px;height:27px;background:#383838"></div>
  <div class="a" style="left:1076.6px;top:95px;width:3.4px;height:14px;background:#383838"></div>
  <span class="vt" style="left:1075.4px;top:41px">通知</span>
  <span class="vt" style="left:1075.4px;top:61.4px">诊断工具</span>
  <span class="vt" style="left:1075.4px;top:95.4px">属性</span>
</div>


<!-- ===== bottom ===== -->
<div id="bottom">
  <span class="t" style="left:18px;top:557px;color:#c0c0c0;font-size:6.7px">错误列表</span>
  <span class="t" style="left:52px;top:557px;color:#c0c0c0;font-size:6.7px">输出</span>
  <div class="a" style="left:18px;top:568px;width:27px;height:3.4px;background:#383838"></div>
  <div class="a" style="left:52px;top:568px;width:13px;height:3.4px;background:#383838"></div>
  <!-- status bar -->
  <div class="a" style="left:0;top:571.2px;width:1080px;height:14.4px;background:#424242"></div>
  <svg style="left:2px;top:574px" width="11" height="10" viewBox="0 0 11 10"><path d="M0.6 0.8H9.6V6.8H5.6L3.8 8.6V6.8H0.6Z" fill="none" stroke="#e0e0e0" stroke-width="0.8"/></svg>
  <span class="t" style="left:15.6px;top:573.7px;color:#f0f0f0;font-size:6.5px">就绪</span>
  <!-- IME bar -->
  <div class="a" style="left:772px;top:571px;width:81px;height:13px;background:#fcfcfc"></div>
  <svg style="left:755px;top:564px" width="108" height="26" viewBox="0 0 108 26">
    <rect x="7.2" y="6.2" width="13.6" height="13.6" rx="2.2" fill="#3cb52f" transform="rotate(-13 14 13)"/>
    <path d="M38.6 16.2Q43.4 16 43.6 10.4Q46.6 14.4 43.6 16.6Q41 18.2 38.6 16.2Z" fill="#2f3a52"/>
    <circle cx="52" cy="11.8" r="1" fill="#2f3a52"/><path d="M55 12.6Q56.2 14 54.6 15.8" stroke="#2f3a52" stroke-width="1.1" fill="none"/>
    <rect x="62.6" y="10.6" width="8.2" height="5.8" rx="0.6" fill="none" stroke="#2f3a52" stroke-width="1"/><path d="M64.2 12.4H69.4" stroke="#2f3a52" stroke-width="0.8" stroke-dasharray="1 0.5"/><path d="M64.8 14.6H68.6" stroke="#2f3a52" stroke-width="0.8"/>
    <circle cx="79.4" cy="11.6" r="1.9" fill="#2f3a52"/><path d="M76 16.8Q76 13.6 79.4 13.6Q82.8 13.6 82.8 16.8Z" fill="#2f3a52"/>
    <g fill="#2f3a52"><circle cx="88.8" cy="11.6" r="1.7"/><circle cx="92.8" cy="11.6" r="1.7"/><circle cx="88.8" cy="15.4" r="1.7"/><circle cx="92.8" cy="15.4" r="1.7"/></g>
  </svg>
  <span class="t" style="left:764.6px;top:570.6px;color:#fff;font-size:12px;font-weight:bold;line-height:12px;height:12px;transform:rotate(-13deg) scaleX(1.25)">S</span>
  <span class="t" style="left:780px;top:572.6px;color:#2f3a52;font-size:8px;font-weight:bold">英</span>
  <!-- source control -->
  <svg style="left:917px;top:573.4px" width="8" height="9" viewBox="0 0 8 9"><path d="M4 8.2V1.2M1.4 3.8L4 1.2L6.6 3.8" fill="none" stroke="#e4e4e4" stroke-width="0.8"/></svg>
  <span class="t" style="left:929.8px;top:573.8px;color:#f0f0f0;font-size:6.5px;letter-spacing:0.28px">添加到源代码管理</span>
  <svg style="left:987.6px;top:577px" width="4" height="3" viewBox="0 0 4 3"><path d="M0 2.6H4L2 0.2Z" fill="#e4e4e4"/></svg>
  <svg style="left:1003.4px;top:574px" width="9" height="9" viewBox="0 0 9 9"><path d="M0.4 1.2H8.6M1.6 1.2V7.8H7.4V1.2M3.4 2.8H5.6V4.8H3.4Z" fill="none" stroke="#e4e4e4" stroke-width="0.8"/></svg>
  <span class="t" style="left:1016.6px;top:573.8px;color:#f0f0f0;font-size:6.5px">选择仓库</span>
  <svg style="left:1047px;top:577px" width="4" height="3" viewBox="0 0 4 3"><path d="M0 2.6H4L2 0.2Z" fill="#e4e4e4"/></svg>
  <svg style="left:1064px;top:573.6px" width="9" height="10" viewBox="0 0 9 10"><path d="M1 7H8Q6.8 6 6.8 3.8Q6.8 1.2 4.5 1.2Q2.2 1.2 2.2 3.8Q2.2 6 1 7ZM3.6 8.2Q4.5 9 5.4 8.2" fill="none" stroke="#e4e4e4" stroke-width="0.8"/></svg>
  <!-- taskbar sliver -->
  <div class="a" style="left:0;top:585.6px;width:1080px;height:4.4px;background:linear-gradient(90deg,#21404a 0,#1f3d48 25%,#1b3040 55%,#1a2740 80%,#1a2342 100%)"></div>
  <div class="a" style="left:84px;top:585.6px;width:27px;height:4.4px;background:#4b6570"></div>
  <div class="a" style="left:1022px;top:588.2px;width:13px;height:1.8px;overflow:hidden;color:#e8e8f0;font-size:6px;line-height:6px">15:08</div>
</div>


</div>
</body>
</html>
